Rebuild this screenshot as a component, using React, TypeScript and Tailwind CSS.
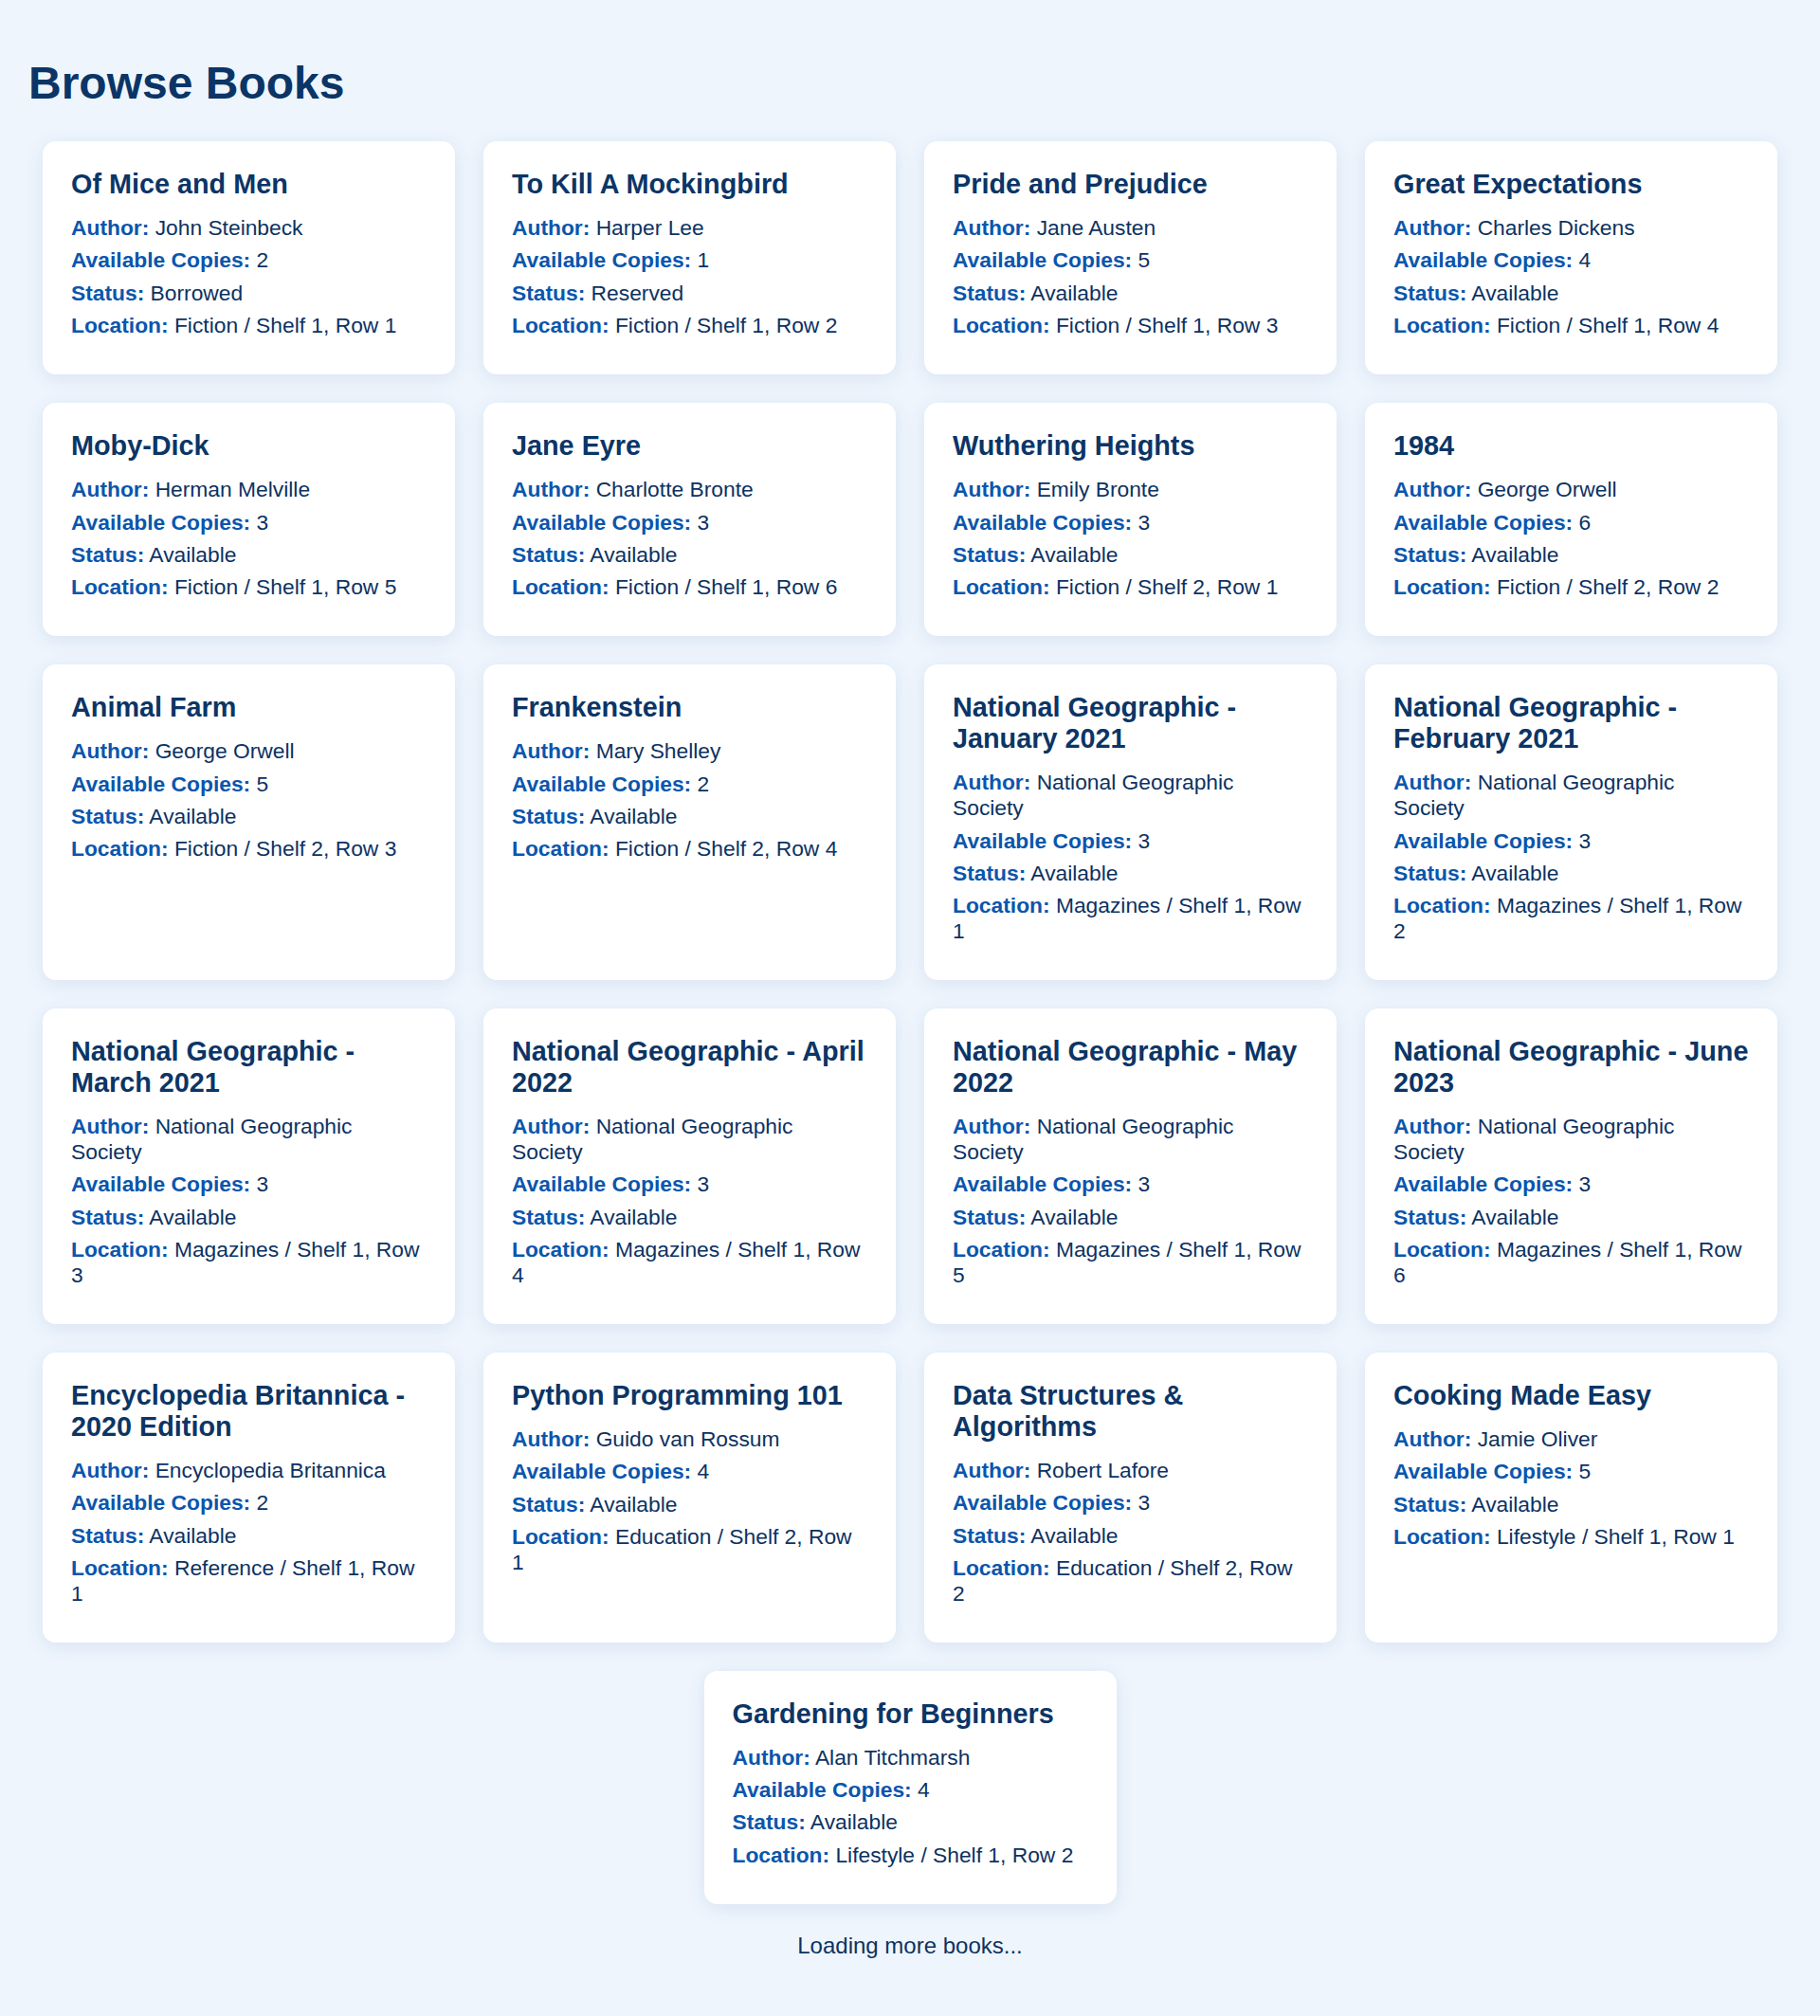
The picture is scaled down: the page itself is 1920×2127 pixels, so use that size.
import React from 'react';

type Book = {
  title: string;
  author: string;
  copies: number;
  status: string;
  location: string;
};

const BOOKS: Book[] = [
  { title: 'Of Mice and Men', author: 'John Steinbeck', copies: 2, status: 'Borrowed', location: 'Fiction / Shelf 1, Row 1' },
  { title: 'To Kill A Mockingbird', author: 'Harper Lee', copies: 1, status: 'Reserved', location: 'Fiction / Shelf 1, Row 2' },
  { title: 'Pride and Prejudice', author: 'Jane Austen', copies: 5, status: 'Available', location: 'Fiction / Shelf 1, Row 3' },
  { title: 'Great Expectations', author: 'Charles Dickens', copies: 4, status: 'Available', location: 'Fiction / Shelf 1, Row 4' },
  { title: 'Moby-Dick', author: 'Herman Melville', copies: 3, status: 'Available', location: 'Fiction / Shelf 1, Row 5' },
  { title: 'Jane Eyre', author: 'Charlotte Bronte', copies: 3, status: 'Available', location: 'Fiction / Shelf 1, Row 6' },
  { title: 'Wuthering Heights', author: 'Emily Bronte', copies: 3, status: 'Available', location: 'Fiction / Shelf 2, Row 1' },
  { title: '1984', author: 'George Orwell', copies: 6, status: 'Available', location: 'Fiction / Shelf 2, Row 2' },
  { title: 'Animal Farm', author: 'George Orwell', copies: 5, status: 'Available', location: 'Fiction / Shelf 2, Row 3' },
  { title: 'Frankenstein', author: 'Mary Shelley', copies: 2, status: 'Available', location: 'Fiction / Shelf 2, Row 4' },
  { title: 'National Geographic - January 2021', author: 'National Geographic Society', copies: 3, status: 'Available', location: 'Magazines / Shelf 1, Row 1' },
  { title: 'National Geographic - February 2021', author: 'National Geographic Society', copies: 3, status: 'Available', location: 'Magazines / Shelf 1, Row 2' },
  { title: 'National Geographic - March 2021', author: 'National Geographic Society', copies: 3, status: 'Available', location: 'Magazines / Shelf 1, Row 3' },
  { title: 'National Geographic - April 2022', author: 'National Geographic Society', copies: 3, status: 'Available', location: 'Magazines / Shelf 1, Row 4' },
  { title: 'National Geographic - May 2022', author: 'National Geographic Society', copies: 3, status: 'Available', location: 'Magazines / Shelf 1, Row 5' },
  { title: 'National Geographic - June 2023', author: 'National Geographic Society', copies: 3, status: 'Available', location: 'Magazines / Shelf 1, Row 6' },
  { title: 'Encyclopedia Britannica - 2020 Edition', author: 'Encyclopedia Britannica', copies: 2, status: 'Available', location: 'Reference / Shelf 1, Row 1' },
  { title: 'Python Programming 101', author: 'Guido van Rossum', copies: 4, status: 'Available', location: 'Education / Shelf 2, Row 1' },
  { title: 'Data Structures & Algorithms', author: 'Robert Lafore', copies: 3, status: 'Available', location: 'Education / Shelf 2, Row 2' },
  { title: 'Cooking Made Easy', author: 'Jamie Oliver', copies: 5, status: 'Available', location: 'Lifestyle / Shelf 1, Row 1' },
  { title: 'Gardening for Beginners', author: 'Alan Titchmarsh', copies: 4, status: 'Available', location: 'Lifestyle / Shelf 1, Row 2' },
];

function Field({ label, value, first }: { label: string; value: string | number; first?: boolean }) {
  return (
    <p className={`${first ? 'mt-4' : 'mt-[7.6px]'} text-[22.8px] leading-[26.8px] text-[#0c3262]`}>
      <strong className="font-bold text-[#0a56ad]">{label}:</strong> {value}
    </p>
  );
}

function BookCard({ book }: { book: Book }) {
  return (
    <div className="m-[15px] w-[435px] rounded-[14px] bg-white px-[30px] pt-[29px] pb-[38px] shadow-[0_4px_20px_rgba(30,70,130,0.10)]">
      <h2 className="text-[28.8px] leading-[33.1px] font-bold text-[#0b3566]">{book.title}</h2>
      <Field first label="Author" value={book.author} />
      <Field label="Available Copies" value={book.copies} />
      <Field label="Status" value={book.status} />
      <Field label="Location" value={book.location} />
    </div>
  );
}

export default function App() {
  return (
    <div className="min-h-screen bg-[#eef5fd] px-[30px] pt-[60px] pb-[61px] font-['Liberation_Sans',Arial,sans-serif]">
      <h1 className="mb-[19px] text-[48px] leading-[55px] font-bold text-[#0b3566]">Browse Books</h1>
      <div className="flex flex-wrap justify-center">
        {BOOKS.map((b) => (
          <BookCard key={b.title} book={b} />
        ))}
      </div>
      <p className="mt-[15px] text-center text-[24px] leading-[27.6px] text-[#0c3262]">Loading more books...</p>
    </div>
  );
}
